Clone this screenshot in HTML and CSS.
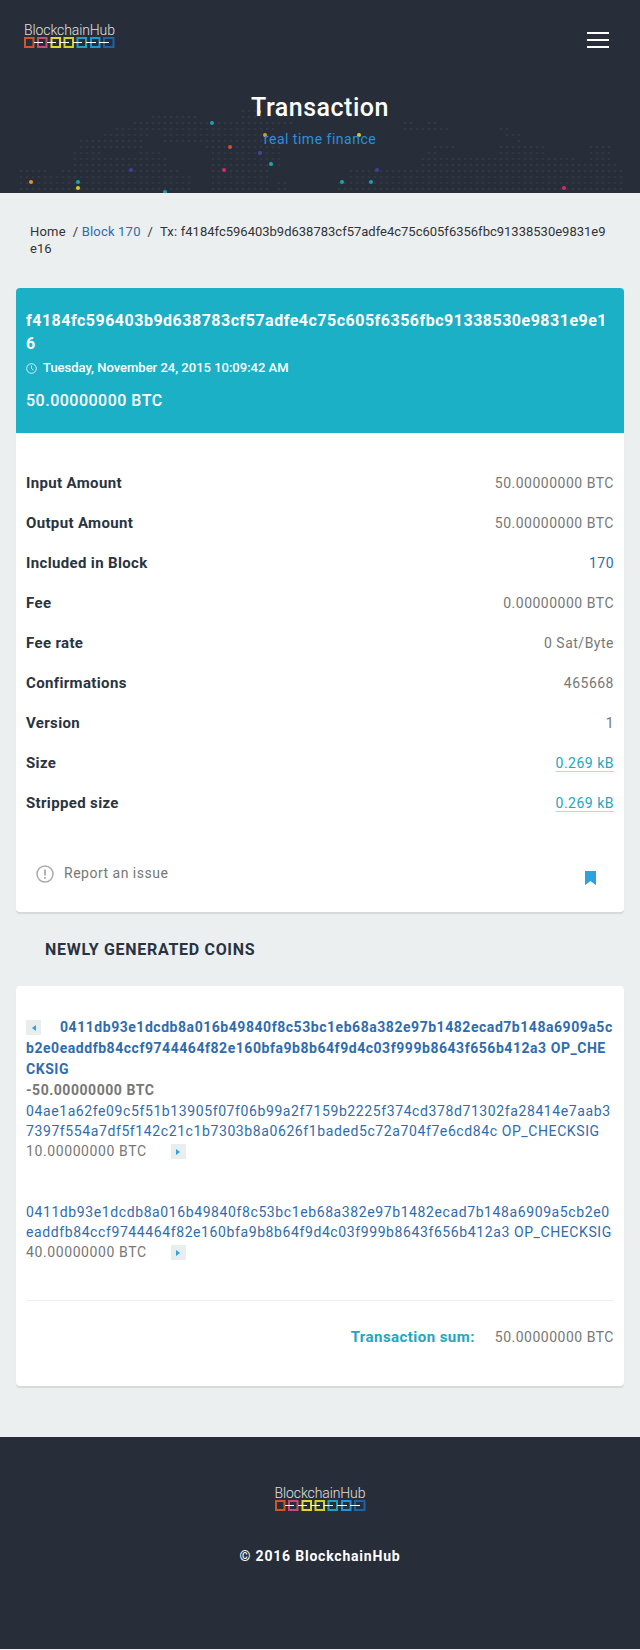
FILE: index.html
```html
<!DOCTYPE html>
<html lang="en">
<head>
  <meta charset="UTF-8">
  <title>Transaction - BlockchainHub</title>
  <link rel="stylesheet" href="styles.css">
</head>
<body>

<svg class="defs" width="0" height="0">
  <defs>
    <g id="chain" fill="none" stroke-width="2">
      <rect x="1" y="1" width="8.500" height="9" stroke="#d0542c"/>
      <rect x="14" y="1" width="8.500" height="9" stroke="#c94c70"/>
      <rect x="27.500" y="1" width="8.500" height="9" stroke="#e2d82f"/>
      <rect x="40.500" y="1" width="8.500" height="9" stroke="#cfcf30"/>
      <rect x="53.500" y="1" width="8.500" height="9" stroke="#23a0b8"/>
      <rect x="67" y="1" width="8.500" height="9" stroke="#2096d6"/>
      <rect x="80" y="1" width="9.500" height="9" stroke="#1c62a6"/>
      <path stroke="#fff" stroke-width="1" d="M10 5.500h9M23 5.500h9M36 5.500h9M49 5.500h9M62 5.500h10M75 5.500h10"/>
    </g>
    <pattern id="dots" width="6" height="6" patternUnits="userSpaceOnUse">
      <circle cx="3" cy="3" r="1.100" fill="#333a46"/>
    </pattern>
  </defs>
</svg>

<header class="hero">
  <svg class="map" width="640" height="193" viewBox="0 0 640 193">
    <g fill="url(#dots)">
      <rect x="150" y="114" width="48" height="6"/>
      <rect x="132" y="120" width="162" height="6"/>
      <rect x="240" y="108" width="24" height="12"/>
      <rect x="114" y="126" width="162" height="6"/>
      <rect x="102" y="132" width="48" height="6"/>
      <rect x="162" y="132" width="114" height="12"/>
      <rect x="78" y="138" width="66" height="12"/>
      <rect x="204" y="144" width="78" height="6"/>
      <rect x="72" y="150" width="30" height="6"/>
      <rect x="138" y="150" width="24" height="6"/>
      <rect x="210" y="150" width="72" height="18"/>
      <rect x="72" y="156" width="96" height="12"/>
      <rect x="18" y="168" width="30" height="6"/>
      <rect x="60" y="168" width="120" height="6"/>
      <rect x="210" y="168" width="60" height="25"/>
      <rect x="18" y="174" width="174" height="19"/>
      <rect x="276" y="180" width="12" height="13"/>
      <rect x="402" y="120" width="12" height="6"/>
      <rect x="426" y="120" width="12" height="6"/>
      <rect x="402" y="126" width="48" height="6"/>
      <rect x="498" y="126" width="12" height="6"/>
      <rect x="504" y="132" width="18" height="6"/>
      <rect x="516" y="138" width="6" height="6"/>
      <rect x="432" y="144" width="24" height="6"/>
      <rect x="498" y="144" width="48" height="12"/>
      <rect x="588" y="144" width="24" height="12"/>
      <rect x="426" y="150" width="12" height="6"/>
      <rect x="420" y="156" width="156" height="6"/>
      <rect x="588" y="156" width="24" height="6"/>
      <rect x="420" y="162" width="198" height="6"/>
      <rect x="348" y="168" width="276" height="12"/>
      <rect x="336" y="180" width="288" height="13"/>
    </g>
    <g>
      <circle cx="212" cy="123" r="2" fill="#1d9db5"/>
      <circle cx="259" cy="112" r="2" fill="#c9b52e"/>
      <circle cx="265" cy="135" r="2" fill="#e0942c"/>
      <circle cx="359" cy="135" r="2" fill="#d8c92e"/>
      <circle cx="230" cy="147" r="2" fill="#d0502f"/>
      <circle cx="260" cy="153" r="2" fill="#3f4a9c"/>
      <circle cx="271" cy="164" r="2" fill="#17a8a8"/>
      <circle cx="131" cy="170" r="2" fill="#3f3f9c"/>
      <circle cx="224" cy="170" r="2" fill="#d42a6c"/>
      <circle cx="377" cy="170" r="2" fill="#3f3f9c"/>
      <circle cx="31" cy="182" r="2" fill="#e0942c"/>
      <circle cx="78" cy="182" r="2" fill="#17a8a8"/>
      <circle cx="78" cy="188" r="2" fill="#d8c92e"/>
      <circle cx="342" cy="182" r="2" fill="#17a8a8"/>
      <circle cx="371" cy="182" r="2" fill="#1d9db5"/>
      <circle cx="564" cy="188" r="2" fill="#d42a6c"/>
      <circle cx="165" cy="192" r="2" fill="#1d9db5"/>
    </g>
  </svg>

  <div class="topbar">
    <a class="logo" href="#">
      <span class="logo-text">BlockchainHub</span>
      <svg width="91" height="12" viewBox="0 0 91 12"><use href="#chain"/></svg>
    </a>
    <div class="burger"><span></span><span></span><span></span></div>
  </div>

  <div class="hero-title">
    <h1>Transaction</h1>
    <p>real time finance</p>
  </div>
</header>

<main class="content">
  <div class="breadcrumb">Home &nbsp;/ <a href="#">Block 170</a> &nbsp;/ &nbsp;Tx: <span class="hash">f4184fc596403b9d638783cf57adfe4c75c605f6356fbc91338530e9831e9e16</span></div>

  <section class="card">
    <div class="card-head">
      <h2>f4184fc596403b9d638783cf57adfe4c75c605f6356fbc91338530e9831e9e16</h2>
      <div class="date">
        <svg width="11" height="11" viewBox="0 0 11 11" fill="none" stroke="#fff" stroke-width=".8"><circle cx="5.500" cy="5.500" r="4.800"/><path d="M5.500 2.500v3l2 1.500"/></svg>
        Tuesday, November 24, 2015 10:09:42 AM
      </div>
      <div class="amount">50.00000000 BTC</div>
    </div>

    <div class="rows">
      <div class="row"><b>Input Amount</b><span>50.00000000 BTC</span></div>
      <div class="row"><b>Output Amount</b><span>50.00000000 BTC</span></div>
      <div class="row"><b>Included in Block</b><a href="#">170</a></div>
      <div class="row"><b>Fee</b><span>0.00000000 BTC</span></div>
      <div class="row"><b>Fee rate</b><span>0 Sat/Byte</span></div>
      <div class="row"><b>Confirmations</b><span>465668</span></div>
      <div class="row"><b>Version</b><span>1</span></div>
      <div class="row"><b>Size</b><a class="teal" href="#">0.269 kB</a></div>
      <div class="row"><b>Stripped size</b><a class="teal" href="#">0.269 kB</a></div>
    </div>

    <div class="card-foot">
      <div class="report">
        <svg width="18" height="18" viewBox="0 0 18 18" fill="none" stroke="#aaa"><circle cx="9" cy="9" r="8" stroke-width="1.500"/><path d="M9 4.500v6M9 12v1.800" stroke-width="1.800"/></svg>
        <span>Report an issue</span>
      </div>
      <svg class="bookmark" width="11" height="14" viewBox="0 0 11 14"><path d="M0 0h11v14l-1-.500-4.500-3.500-4.500 3.500-1 .500z" fill="#2ca3dc"/></svg>
    </div>
  </section>

  <h3 class="section-title">NEWLY GENERATED COINS</h3>

  <section class="card tx">
    <div class="io strong">
      <span class="arrow first"><i class="tri left"></i></span><a href="#">0411db93e1dcdb8a016b49840f8c53bc1eb68a382e97b1482ecad7b148a6909a5cb2e0eaddfb84ccf9744464f82e160bfa9b8b64f9d4c03f999b8643f656b412a3 OP_CHECKSIG</a>
      <div class="val">-50.00000000 BTC</div>
    </div>
    <div class="io">
      <a href="#">04ae1a62fe09c5f51b13905f07f06b99a2f7159b2225f374cd378d71302fa28414e7aab37397f554a7df5f142c21c1b7303b8a0626f1baded5c72a704f7e6cd84c OP_CHECKSIG</a>
      <div class="val">10.00000000 BTC <span class="arrow"><i class="tri"></i></span></div>
    </div>
    <div class="io out-next">
      <a href="#">0411db93e1dcdb8a016b49840f8c53bc1eb68a382e97b1482ecad7b148a6909a5cb2e0eaddfb84ccf9744464f82e160bfa9b8b64f9d4c03f999b8643f656b412a3 OP_CHECKSIG</a>
      <div class="val">40.00000000 BTC <span class="arrow"><i class="tri"></i></span></div>
    </div>
    <div class="sum"><b>Transaction sum:</b><span>50.00000000 BTC</span></div>
  </section>
</main>

<footer class="footer">
  <a class="logo" href="#">
    <span class="logo-text">BlockchainHub</span>
    <svg width="91" height="12" viewBox="0 0 91 12"><use href="#chain"/></svg>
  </a>
  <p>&copy; 2016 BlockchainHub</p>
</footer>

</body>
</html>
```

FILE: styles.css
```css
body {
  margin: 0;
  font-family: Roboto, "Liberation Sans", sans-serif;
  font-size: 14px;
  letter-spacing: .5px;
  color: #777;
  background-color: #ebeff0;
}
a {
  color: #2f6cae;
  text-decoration: none;
}
.defs {
  display: block;
  height: 0;
}

.hero {
  position: relative;
  height: 193px;
  overflow: hidden;
  background-color: #272e39;
}
.map {
  position: absolute;
  left: 0;
  top: 0;
}
.topbar {
  position: relative;
  display: flex;
  justify-content: space-between;
  padding: 24px 31px 0 24px;
}
.logo {
  display: flex;
  flex-direction: column;
  width: 91px;
}
.logo svg {
  display: block;
}
.logo-text {
  font-size: 14px;
  line-height: 13px;
  font-weight: 300;
  letter-spacing: -.1px;
  color: #e0e0e0;
  white-space: nowrap;
}
.burger {
  display: flex;
  flex-direction: column;
  gap: 5px;
  width: 22px;
  padding-top: 8px;
}
.burger span {
  height: 2px;
  background-color: #fff;
}
.hero-title {
  position: relative;
  margin-top: 45px;
  text-align: center;
}
.hero-title h1 {
  margin: 0;
  font-size: 25px;
  line-height: 28px;
  font-weight: 500;
  color: #fff;
}
.hero-title p {
  margin: 8px 0 0;
  font-size: 14px;
  line-height: 18px;
  color: #2a90dc;
}

.content {
  padding: 30px 16px 51px;
}
.breadcrumb {
  padding: 0 14px;
  font-size: 13px;
  line-height: 17px;
  letter-spacing: .2px;
  color: #333;
  word-break: break-all;
}
.hash {
  letter-spacing: 0;
}
.card {
  border-radius: 4px;
  background-color: #fff;
  box-shadow: 0 2px 1px #d5d9da;
}
.breadcrumb + .card {
  margin-top: 31px;
}
.card-head {
  padding: 21px 10px 22px;
  border-radius: 4px 4px 0 0;
  color: #fff;
  background-color: #1bb0c6;
}
.card-head h2 {
  margin: 0;
  font-size: 16px;
  line-height: 23px;
  font-weight: 700;
  word-break: break-all;
}
.date {
  display: flex;
  align-items: center;
  gap: 6px;
  margin-top: 3px;
  font-size: 13px;
  line-height: 20px;
  font-weight: 500;
  letter-spacing: 0;
}
.amount {
  margin-top: 13px;
  font-size: 16px;
  line-height: 20px;
  font-weight: 500;
}
.rows {
  padding: 30px 10px 0;
}
.row {
  display: flex;
  justify-content: space-between;
  height: 40px;
  line-height: 40px;
}
.row b {
  font-size: 15px;
  font-weight: 700;
  letter-spacing: .35px;
  color: #2a3340;
}
.row .teal {
  color: #22a7c0;
  text-decoration: underline;
  text-decoration-color: #a5dde6;
  text-underline-offset: 3px;
}
.card-foot {
  display: flex;
  justify-content: space-between;
  padding: 39px 28px 27px 20px;
}
.report {
  display: flex;
  align-items: center;
  gap: 10px;
}
.report span {
  padding-bottom: 2px;
}
.bookmark {
  margin-top: 9px;
}
.section-title {
  margin: 28px 0 26px;
  padding-left: 29px;
  font-size: 16px;
  line-height: 20px;
  font-weight: 700;
  letter-spacing: .7px;
  color: #2a3340;
}
.tx {
  padding: 31px 10px 39px;
}
.io {
  line-height: 20px;
  letter-spacing: .6px;
  word-break: break-all;
}
.strong {
  font-weight: 700;
  line-height: 21px;
  letter-spacing: .54px;
}
.out-next {
  margin-top: 41px;
}
.val {
  color: #777;
}
.arrow {
  display: inline-flex;
  align-items: center;
  justify-content: center;
  width: 15px;
  height: 15px;
  margin: 3px 0 0 20px;
  vertical-align: top;
  background-color: #e8eef0;
}
.arrow.first {
  margin: 3px 19px 0 0;
}
.tri {
  width: 0;
  height: 0;
  border-top: 3px solid transparent;
  border-bottom: 3px solid transparent;
  border-left: 4px solid #2ca3dc;
}
.tri.left {
  border-left: 0;
  border-right: 4px solid #2ca3dc;
}
.sum {
  display: flex;
  justify-content: flex-end;
  gap: 20px;
  margin-top: 38px;
  padding-top: 26px;
  border-top: 1px solid #ebeff0;
  line-height: 20px;
}
.sum b {
  font-size: 15px;
  letter-spacing: .45px;
  color: #22a7c0;
}

.footer {
  display: flex;
  flex-direction: column;
  align-items: center;
  height: 212px;
  padding-top: 50px;
  box-sizing: border-box;
  background-color: #272e39;
}
.footer p {
  margin: 34px 0 0;
  font-size: 14px;
  line-height: 20px;
  font-weight: 700;
  letter-spacing: .8px;
  color: #fff;
}
```
